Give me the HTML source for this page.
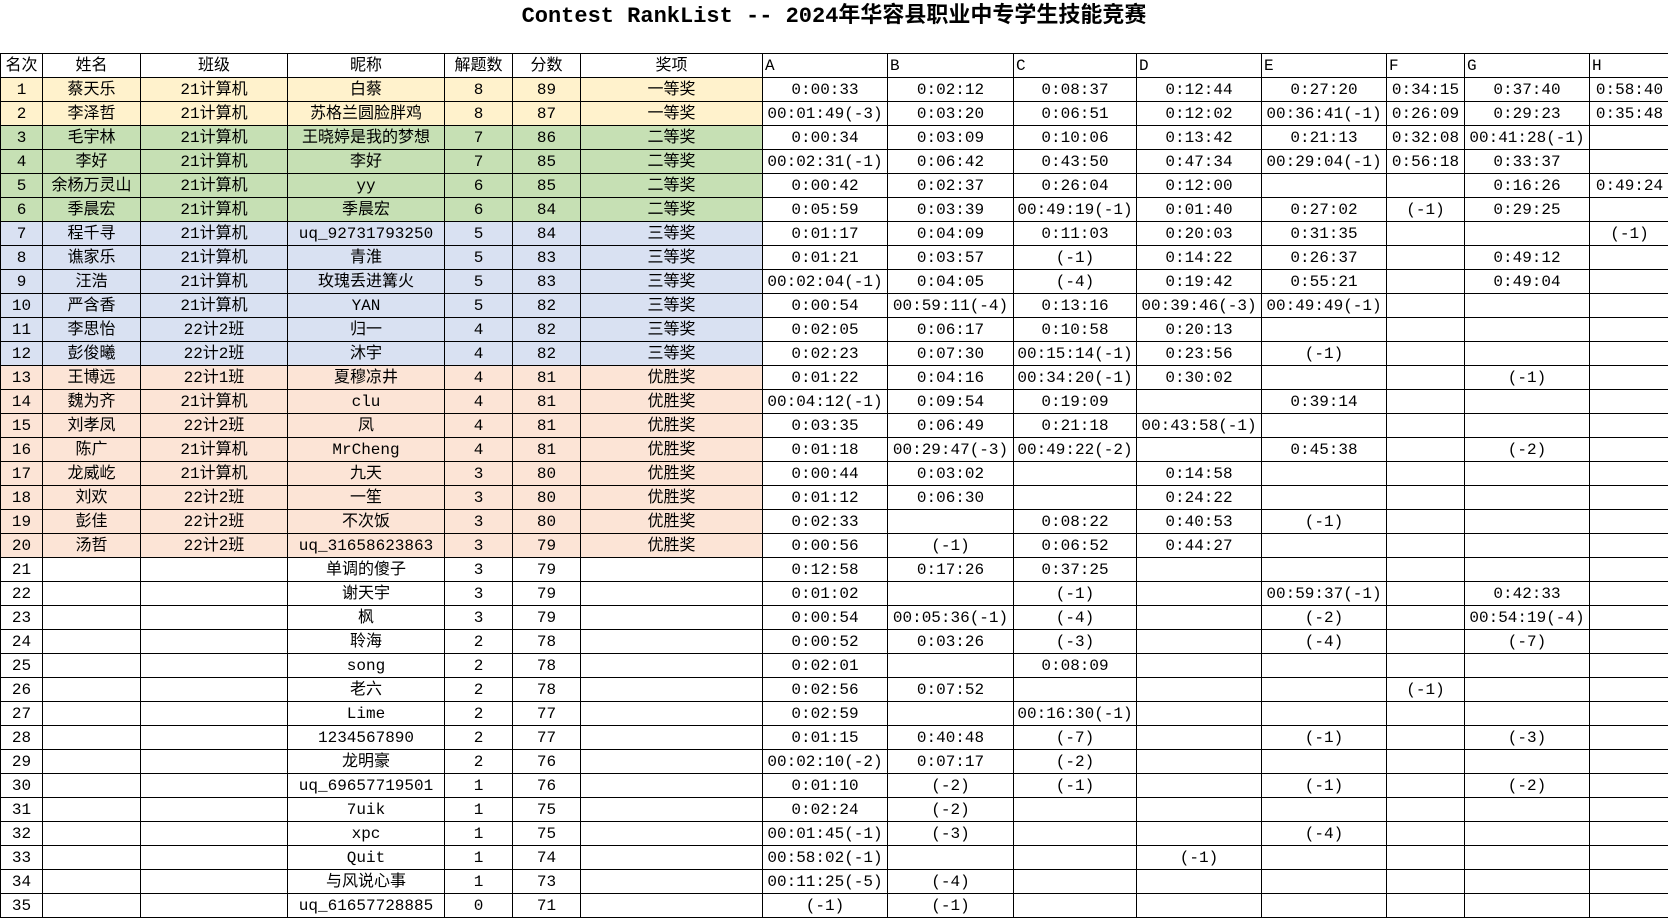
<!DOCTYPE html>
<html><head><meta charset="utf-8"><style>
body{margin:0;width:1668px;height:918px;background:#fff;overflow:hidden;font-family:"Liberation Mono","Noto Sans CJK SC",monospace;color:#000}
h1{position:absolute;top:3px;left:0;width:1668px;margin:0;text-align:center;font-size:22px;font-weight:bold;line-height:28px}
table{position:absolute;left:0;top:53px;border-collapse:collapse;table-layout:fixed;width:1669px}
td{border:1px solid #000;padding:0;height:23px;font-size:16px;text-align:center;white-space:nowrap;overflow:hidden;line-height:22px}
tr.h td.l{text-align:left;padding-left:2px}
tr.y td:nth-child(-n+7){background:#fff2cc}
tr.g td:nth-child(-n+7){background:#c6e0b4}
tr.b td:nth-child(-n+7){background:#d9e1f2}
tr.o td:nth-child(-n+7){background:#fce4d6}
</style></head><body>
<h1>Contest RankList -- 2024年华容县职业中专学生技能竞赛</h1>
<table>
<colgroup><col style="width:42px"><col style="width:98px"><col style="width:147px"><col style="width:157px"><col style="width:68px"><col style="width:68px"><col style="width:182px"><col style="width:125px"><col style="width:126px"><col style="width:123px"><col style="width:125px"><col style="width:125px"><col style="width:78px"><col style="width:125px"><col style="width:80px"></colgroup>
<tr class="h"><td>名次</td><td>姓名</td><td>班级</td><td>昵称</td><td>解题数</td><td>分数</td><td>奖项</td><td class="l">A</td><td class="l">B</td><td class="l">C</td><td class="l">D</td><td class="l">E</td><td class="l">F</td><td class="l">G</td><td class="l">H</td></tr>
<tr class="y"><td>1</td><td>蔡天乐</td><td>21计算机</td><td>白蔡</td><td>8</td><td>89</td><td>一等奖</td><td>0:00:33</td><td>0:02:12</td><td>0:08:37</td><td>0:12:44</td><td>0:27:20</td><td>0:34:15</td><td>0:37:40</td><td>0:58:40</td></tr>
<tr class="y"><td>2</td><td>李泽哲</td><td>21计算机</td><td>苏格兰圆脸胖鸡</td><td>8</td><td>87</td><td>一等奖</td><td>00:01:49(-3)</td><td>0:03:20</td><td>0:06:51</td><td>0:12:02</td><td>00:36:41(-1)</td><td>0:26:09</td><td>0:29:23</td><td>0:35:48</td></tr>
<tr class="g"><td>3</td><td>毛宇林</td><td>21计算机</td><td>王晓婷是我的梦想</td><td>7</td><td>86</td><td>二等奖</td><td>0:00:34</td><td>0:03:09</td><td>0:10:06</td><td>0:13:42</td><td>0:21:13</td><td>0:32:08</td><td>00:41:28(-1)</td><td></td></tr>
<tr class="g"><td>4</td><td>李好</td><td>21计算机</td><td>李好</td><td>7</td><td>85</td><td>二等奖</td><td>00:02:31(-1)</td><td>0:06:42</td><td>0:43:50</td><td>0:47:34</td><td>00:29:04(-1)</td><td>0:56:18</td><td>0:33:37</td><td></td></tr>
<tr class="g"><td>5</td><td>余杨万灵山</td><td>21计算机</td><td>yy</td><td>6</td><td>85</td><td>二等奖</td><td>0:00:42</td><td>0:02:37</td><td>0:26:04</td><td>0:12:00</td><td></td><td></td><td>0:16:26</td><td>0:49:24</td></tr>
<tr class="g"><td>6</td><td>季晨宏</td><td>21计算机</td><td>季晨宏</td><td>6</td><td>84</td><td>二等奖</td><td>0:05:59</td><td>0:03:39</td><td>00:49:19(-1)</td><td>0:01:40</td><td>0:27:02</td><td>(-1)</td><td>0:29:25</td><td></td></tr>
<tr class="b"><td>7</td><td>程千寻</td><td>21计算机</td><td>uq_92731793250</td><td>5</td><td>84</td><td>三等奖</td><td>0:01:17</td><td>0:04:09</td><td>0:11:03</td><td>0:20:03</td><td>0:31:35</td><td></td><td></td><td>(-1)</td></tr>
<tr class="b"><td>8</td><td>谯家乐</td><td>21计算机</td><td>青淮</td><td>5</td><td>83</td><td>三等奖</td><td>0:01:21</td><td>0:03:57</td><td>(-1)</td><td>0:14:22</td><td>0:26:37</td><td></td><td>0:49:12</td><td></td></tr>
<tr class="b"><td>9</td><td>汪浩</td><td>21计算机</td><td>玫瑰丢进篝火</td><td>5</td><td>83</td><td>三等奖</td><td>00:02:04(-1)</td><td>0:04:05</td><td>(-4)</td><td>0:19:42</td><td>0:55:21</td><td></td><td>0:49:04</td><td></td></tr>
<tr class="b"><td>10</td><td>严含香</td><td>21计算机</td><td>YAN</td><td>5</td><td>82</td><td>三等奖</td><td>0:00:54</td><td>00:59:11(-4)</td><td>0:13:16</td><td>00:39:46(-3)</td><td>00:49:49(-1)</td><td></td><td></td><td></td></tr>
<tr class="b"><td>11</td><td>李思怡</td><td>22计2班</td><td>归一</td><td>4</td><td>82</td><td>三等奖</td><td>0:02:05</td><td>0:06:17</td><td>0:10:58</td><td>0:20:13</td><td></td><td></td><td></td><td></td></tr>
<tr class="b"><td>12</td><td>彭俊曦</td><td>22计2班</td><td>沐宇</td><td>4</td><td>82</td><td>三等奖</td><td>0:02:23</td><td>0:07:30</td><td>00:15:14(-1)</td><td>0:23:56</td><td>(-1)</td><td></td><td></td><td></td></tr>
<tr class="o"><td>13</td><td>王博远</td><td>22计1班</td><td>夏穆凉井</td><td>4</td><td>81</td><td>优胜奖</td><td>0:01:22</td><td>0:04:16</td><td>00:34:20(-1)</td><td>0:30:02</td><td></td><td></td><td>(-1)</td><td></td></tr>
<tr class="o"><td>14</td><td>魏为齐</td><td>21计算机</td><td>clu</td><td>4</td><td>81</td><td>优胜奖</td><td>00:04:12(-1)</td><td>0:09:54</td><td>0:19:09</td><td></td><td>0:39:14</td><td></td><td></td><td></td></tr>
<tr class="o"><td>15</td><td>刘孝凤</td><td>22计2班</td><td>凤</td><td>4</td><td>81</td><td>优胜奖</td><td>0:03:35</td><td>0:06:49</td><td>0:21:18</td><td>00:43:58(-1)</td><td></td><td></td><td></td><td></td></tr>
<tr class="o"><td>16</td><td>陈广</td><td>21计算机</td><td>MrCheng</td><td>4</td><td>81</td><td>优胜奖</td><td>0:01:18</td><td>00:29:47(-3)</td><td>00:49:22(-2)</td><td></td><td>0:45:38</td><td></td><td>(-2)</td><td></td></tr>
<tr class="o"><td>17</td><td>龙威屹</td><td>21计算机</td><td>九天</td><td>3</td><td>80</td><td>优胜奖</td><td>0:00:44</td><td>0:03:02</td><td></td><td>0:14:58</td><td></td><td></td><td></td><td></td></tr>
<tr class="o"><td>18</td><td>刘欢</td><td>22计2班</td><td>一笙</td><td>3</td><td>80</td><td>优胜奖</td><td>0:01:12</td><td>0:06:30</td><td></td><td>0:24:22</td><td></td><td></td><td></td><td></td></tr>
<tr class="o"><td>19</td><td>彭佳</td><td>22计2班</td><td>不次饭</td><td>3</td><td>80</td><td>优胜奖</td><td>0:02:33</td><td></td><td>0:08:22</td><td>0:40:53</td><td>(-1)</td><td></td><td></td><td></td></tr>
<tr class="o"><td>20</td><td>汤哲</td><td>22计2班</td><td>uq_31658623863</td><td>3</td><td>79</td><td>优胜奖</td><td>0:00:56</td><td>(-1)</td><td>0:06:52</td><td>0:44:27</td><td></td><td></td><td></td><td></td></tr>
<tr><td>21</td><td></td><td></td><td>单调的傻子</td><td>3</td><td>79</td><td></td><td>0:12:58</td><td>0:17:26</td><td>0:37:25</td><td></td><td></td><td></td><td></td><td></td></tr>
<tr><td>22</td><td></td><td></td><td>谢天宇</td><td>3</td><td>79</td><td></td><td>0:01:02</td><td></td><td>(-1)</td><td></td><td>00:59:37(-1)</td><td></td><td>0:42:33</td><td></td></tr>
<tr><td>23</td><td></td><td></td><td>枫</td><td>3</td><td>79</td><td></td><td>0:00:54</td><td>00:05:36(-1)</td><td>(-4)</td><td></td><td>(-2)</td><td></td><td>00:54:19(-4)</td><td></td></tr>
<tr><td>24</td><td></td><td></td><td>聆海</td><td>2</td><td>78</td><td></td><td>0:00:52</td><td>0:03:26</td><td>(-3)</td><td></td><td>(-4)</td><td></td><td>(-7)</td><td></td></tr>
<tr><td>25</td><td></td><td></td><td>song</td><td>2</td><td>78</td><td></td><td>0:02:01</td><td></td><td>0:08:09</td><td></td><td></td><td></td><td></td><td></td></tr>
<tr><td>26</td><td></td><td></td><td>老六</td><td>2</td><td>78</td><td></td><td>0:02:56</td><td>0:07:52</td><td></td><td></td><td></td><td>(-1)</td><td></td><td></td></tr>
<tr><td>27</td><td></td><td></td><td>Lime</td><td>2</td><td>77</td><td></td><td>0:02:59</td><td></td><td>00:16:30(-1)</td><td></td><td></td><td></td><td></td><td></td></tr>
<tr><td>28</td><td></td><td></td><td>1234567890</td><td>2</td><td>77</td><td></td><td>0:01:15</td><td>0:40:48</td><td>(-7)</td><td></td><td>(-1)</td><td></td><td>(-3)</td><td></td></tr>
<tr><td>29</td><td></td><td></td><td>龙明豪</td><td>2</td><td>76</td><td></td><td>00:02:10(-2)</td><td>0:07:17</td><td>(-2)</td><td></td><td></td><td></td><td></td><td></td></tr>
<tr><td>30</td><td></td><td></td><td>uq_69657719501</td><td>1</td><td>76</td><td></td><td>0:01:10</td><td>(-2)</td><td>(-1)</td><td></td><td>(-1)</td><td></td><td>(-2)</td><td></td></tr>
<tr><td>31</td><td></td><td></td><td>7uik</td><td>1</td><td>75</td><td></td><td>0:02:24</td><td>(-2)</td><td></td><td></td><td></td><td></td><td></td><td></td></tr>
<tr><td>32</td><td></td><td></td><td>xpc</td><td>1</td><td>75</td><td></td><td>00:01:45(-1)</td><td>(-3)</td><td></td><td></td><td>(-4)</td><td></td><td></td><td></td></tr>
<tr><td>33</td><td></td><td></td><td>Quit</td><td>1</td><td>74</td><td></td><td>00:58:02(-1)</td><td></td><td></td><td>(-1)</td><td></td><td></td><td></td><td></td></tr>
<tr><td>34</td><td></td><td></td><td>与风说心事</td><td>1</td><td>73</td><td></td><td>00:11:25(-5)</td><td>(-4)</td><td></td><td></td><td></td><td></td><td></td><td></td></tr>
<tr><td>35</td><td></td><td></td><td>uq_61657728885</td><td>0</td><td>71</td><td></td><td>(-1)</td><td>(-1)</td><td></td><td></td><td></td><td></td><td></td><td></td></tr>
</table>
</body></html>
